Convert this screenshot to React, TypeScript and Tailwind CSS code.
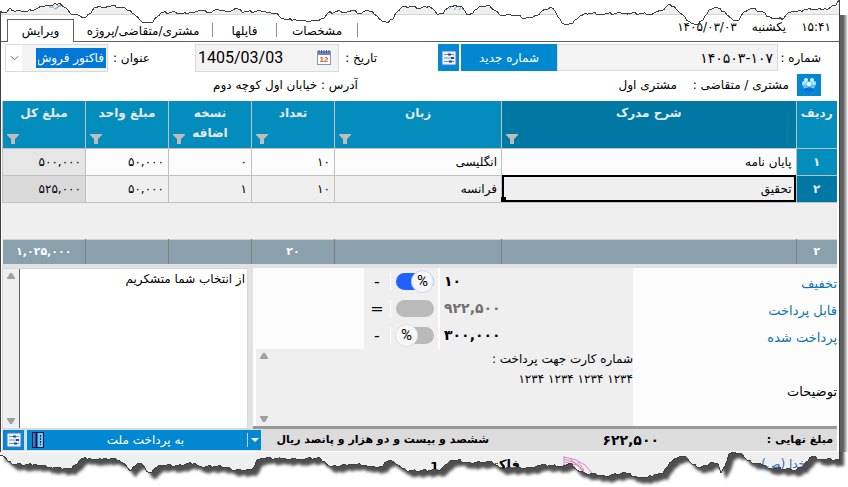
type Point = [number, number];

const TOP_EDGE: Point[] = [
  [0, 11], [7, 12], [10, 8], [14, 11], [28, 11], [36, 9], [42, 7], [47, 5], [53, 5], [60, 3], [66, 8], [70, 13],
  [80, 16], [86, 17], [91, 13], [95, 7], [99, 6], [104, 8], [111, 6], [125, 8], [130, 10], [134, 14], [140, 20],
  [145, 22], [153, 22], [157, 17], [161, 13], [175, 12], [183, 14], [192, 12], [203, 11], [210, 12], [217, 9],
  [225, 11], [231, 11], [238, 9], [244, 12], [261, 11], [268, 13], [276, 13], [280, 17], [288, 20], [295, 19],
  [303, 21], [317, 21], [324, 18], [328, 13], [340, 11], [347, 12], [353, 10], [360, 13], [367, 10], [372, 11],
  [377, 16], [383, 22], [388, 23], [393, 19], [397, 12], [401, 8], [405, 6], [421, 8], [429, 6], [433, 9],
  [438, 15], [443, 14], [448, 8], [455, 5], [461, 6], [467, 15], [473, 13], [480, 6], [490, 6], [496, 11],
  [500, 15], [516, 15], [524, 18], [531, 18], [537, 16], [541, 12], [551, 7], [555, 11], [558, 17], [562, 23],
  [568, 25], [573, 23], [580, 16], [585, 13], [602, 14], [625, 13], [650, 14], [656, 12], [662, 11], [668, 5],
  [674, 6], [679, 12], [685, 17], [690, 22], [698, 25], [703, 20], [709, 10], [718, 8], [725, 12], [731, 18],
  [734, 21], [739, 20], [744, 12], [753, 9], [761, 11], [770, 17], [778, 19], [784, 18], [789, 12], [796, 12],
  [804, 10], [814, 9], [823, 10], [831, 7], [836, 5], [839, 0],
];

const BOTTOM_EDGE: Point[] = [
  [0, 455], [3, 456], [8, 461], [12, 464], [28, 465], [35, 464], [50, 467], [71, 469], [75, 465], [81, 459],
  [90, 458], [98, 460], [105, 458], [119, 460], [127, 467], [131, 471], [136, 465], [141, 463], [145, 468],
  [150, 473], [154, 469], [160, 465], [178, 466], [186, 464], [195, 463], [202, 467], [218, 466], [226, 467],
  [232, 470], [250, 470], [254, 467], [257, 460], [264, 458], [283, 459], [300, 459], [320, 458], [325, 462],
  [331, 467], [352, 464], [365, 465], [375, 467], [383, 466], [388, 461], [391, 460], [396, 464], [403, 469],
  [409, 471], [440, 470], [445, 465], [452, 460], [458, 460], [468, 463], [480, 462], [492, 462], [500, 468],
  [532, 468], [541, 465], [560, 466], [572, 464], [577, 470], [585, 473], [605, 476], [626, 473], [635, 476],
  [646, 478], [654, 475], [663, 474], [668, 466], [675, 458], [681, 456], [687, 458], [693, 465], [701, 467],
  [708, 466], [712, 462], [718, 464], [721, 473], [725, 466], [729, 454], [735, 452], [742, 454], [748, 461],
  [763, 465], [770, 468], [786, 469], [796, 470], [803, 467], [808, 461], [813, 456], [820, 459], [839, 460],
];

// breaks every segment into short steps with a small repeatable wobble
const roughen = (points: Point[]) => {
  const out: string[] = [];
  points.forEach(([x, y], i) => {
    out.push(`${x},${y}`);
    const next = points[i + 1];
    if (!next) return;
    const steps = Math.floor((next[0] - x) / 2);
    for (let s = 1; s < steps; s++) {
      const px = x + s * 2;
      const py = y + ((next[1] - y) * s) / steps;
      out.push(`${px},${(py + ((px * 37) % 5) / 2 - 1).toFixed(1)}`);
    }
  });
  return out.join(" L");
};

const TOP_PATH = roughen(TOP_EDGE);
const BOTTOM_PATH = roughen(BOTTOM_EDGE);

const TABS = ["مشخصات", "فایلها", "مشتری/متقاضی/پروژه", "ویرایش"];

const COLUMNS = [
  { title: "ردیف", filter: false },
  { title: "شرح مدرک", filter: true },
  { title: "زبان", filter: true },
  { title: "تعداد", filter: true },
  { title: "نسخه\nاضافه", filter: true },
  { title: "مبلغ واحد", filter: true },
  { title: "مبلغ کل", filter: true },
];

const ROWS = [
  ["۱", "پایان نامه", "انگلیسی", "۱۰", "۰", "۵۰,۰۰۰", "۵۰۰,۰۰۰"],
  ["۲", "تحقیق", "فرانسه", "۱۰", "۱", "۵۰,۰۰۰", "۵۲۵,۰۰۰"],
];

const TOTALS = ["۲", "", "", "۲۰", "", "", "۱,۰۲۵,۰۰۰"];

const SettingsIcon = () => (
  <svg viewBox="0 0 16 16" className="h-4 w-4 shrink-0">
    <rect x="1" y="1" width="14" height="14" fill="#eef4fd" stroke="#3d7de0" />
    <path d="M3 4.5h10M3 8h10M3 11.5h10" stroke="#7c8db0" />
    <path d="M7 3.500h3v2H7zM10 7h3v2h-3zM8 10.500h3v2H8z" fill="#1747b8" />
  </svg>
);

const PeopleIcon = () => (
  <svg viewBox="0 0 16 16" className="h-4 w-4">
    <path d="M1 8q0-4 3-4t4 3q1-3 4-3t3 4l-2 3H3z" fill="#5cc8f7" />
    <path d="M3 13q0-4 5-4t5 4q-2 2-5 2t-5-2z" fill="#1667e8" />
    <circle cx="5" cy="3" r="2" fill="#d6f4ff" />
    <circle cx="11" cy="3" r="2" fill="#d6f4ff" />
    <circle cx="3" cy="6" r="2" fill="#a9e6ff" />
    <circle cx="13" cy="6" r="2" fill="#a9e6ff" />
    <circle cx="8" cy="7" r="2.400" fill="#e8faff" />
    <path d="M3 11q5-3 10 0" fill="none" stroke="#8fe0ff" />
  </svg>
);

const FunnelIcon = () => (
  <svg viewBox="0 0 12 10" className="absolute bottom-1 left-1 h-[10px] w-3">
    <path d="M0 0h12v1L8 5v5H4V5L0 1z" fill="#bdbdbd" />
  </svg>
);

const CalendarIcon = () => (
  <svg viewBox="0 0 14 15" className="h-[15px] w-[14px] shrink-0">
    <rect x="0.5" y="1.5" width="13" height="13" fill="#fff" stroke="#8795bd" />
    <path d="M1 2h12v3H1z" fill="#6f84bd" />
    <path d="M2 0v3M4.500 0v3M7 0v3M9.500 0v3M12 0v3" stroke="#46557f" />
    <text x="7" y="12" fontSize="8" fontWeight="700" textAnchor="middle" fill="#e4571b" fontFamily="Liberation Sans">
      12
    </text>
  </svg>
);

const CardIcon = () => (
  <svg viewBox="0 0 12 16" className="h-4 w-3 shrink-0">
    <rect x="0.5" y="0.5" width="11" height="15" fill="#5ccbf5" stroke="#2b1240" />
    <path d="M1 1h3v14H1z" fill="#1586c9" />
    <path d="M4.500 1v14" stroke="#2b1240" strokeWidth="2" />
    <path d="M8.500 3v10" stroke="#2b1240" strokeDasharray="2 1" />
  </svg>
);

const Arrow = ({ down = false }: { down?: boolean }) => (
  <svg viewBox="0 0 8 6" className="h-[6px] w-2">
    <path d={down ? "M0 0h8v1L5 6H3L0 1z" : "M0 6h8V5L5 0H3L0 5z"} fill="#a0a0a0" />
  </svg>
);

const ScrollBar = () => (
  <div className="flex w-4 shrink-0 flex-col items-center justify-between bg-[#efefef] py-1">
    <Arrow />
    <Arrow down />
  </div>
);

const Row = ({ label, id, value, sign, muted, toggle }: {
  label: string;
  id: string;
  value: string;
  sign: string;
  muted?: boolean;
  toggle: "on" | "off" | "none";
}) => (
  <div className="flex h-[27px] items-stretch">
    <label htmlFor={id} className="flex w-[204px] items-center bg-[#fcfcfc] pt-1 text-[13px] text-[#0b74ae]">
      {label}
    </label>
    <div className="flex min-w-0 flex-1 border-l-2 border-white">
      <input
        id={id}
        dir="ltr"
        defaultValue={value}
        className={`w-full bg-transparent px-1 text-left text-[14px] font-bold outline-none ${muted ? "text-[#707070]" : "text-black"}`}
      />
    </div>
    <label className="relative my-auto flex w-12 justify-center border-l border-white">
      <input
        type="checkbox"
        aria-label={`${label} %`}
        defaultChecked={toggle === "on"}
        className="h-[17px] w-[38px] appearance-none rounded-full bg-[#bababa] checked:bg-[#2260ff]"
      />
      {toggle !== "none" && (
        <span
          className={`absolute -top-[3px] flex h-[23px] w-[23px] items-center justify-center rounded-full border bg-[#f7f7f7] font-[Roboto] text-[15px] text-black ${toggle === "on" ? "right-1 border-[#c5d8ff]" : "left-1 border-[#e0e0e0]"}`}
        >
          %
        </span>
      )}
    </label>
    <span className="flex w-[26px] items-center justify-center text-[16px]">{sign}</span>
    <div className="w-[111px] bg-[#fcfcfc]" />
  </div>
);

const Header = () => (
  <header className="border-b border-[#606060]">
    <div className="h-[15px] border-b border-[#d4d4d4] bg-[#efefef]" />
    <div className="flex items-end justify-between pl-[6px]">
      <div className="flex h-[26px] gap-[15px] pr-2 pt-[3px]">
        <span>۱۵:۴۱</span>
        <span>یکشنبه</span>
        <span>۱۴۰۵/۰۳/۰۳</span>
      </div>
      <nav className="flex h-[22px]">
        {TABS.map((tab) => (
          <button
            key={tab}
            className={
              tab === "ویرایش"
                ? "-mb-px w-[67px] border border-b-0 border-[#606060] bg-white"
                : "my-1 border-r border-[#909090] leading-4 first:w-[81px] nth-2:w-16 nth-3:w-[139px]"
            }
          >
            {tab}
          </button>
        ))}
      </nav>
    </div>
  </header>
);

const Details = () => (
  <section className="px-1 pb-1">
    <div className="flex h-[31px] items-center pr-[14px]">
      <label htmlFor="number" className="w-[43px]">شماره :</label>
      <input
        id="number"
        dir="ltr"
        defaultValue="۱۴۰۵۰۳-۱۰۷"
        className="h-[27px] min-w-0 flex-1 border border-[#dadada] bg-[#f3f3f3] px-1 text-right text-[14px]"
      />
      <button className="h-[27px] w-24 bg-[#0288d1] text-white">شماره جدید</button>
      <button aria-label="تنظیمات شماره" className="mr-[2px] flex h-[27px] w-[21px] items-center justify-center bg-[#0288d1]">
        <SettingsIcon />
      </button>
      <label htmlFor="date" className="mr-[61px] w-[38px]">تاریخ :</label>
      <div className="flex h-[28px] w-[144px] items-center border border-[#dadada] bg-[#f3f3f3] pr-[7px]">
        <CalendarIcon />
        <input
          id="date"
          dir="ltr"
          defaultValue="1405/03/03"
          className="w-full min-w-0 bg-transparent pl-[2px] text-left font-[Roboto] text-[16px]"
        />
      </div>
      <label htmlFor="title" className="mr-[45px] w-[42px]">عنوان :</label>
      <div className="flex h-[28px] w-[103px] items-center justify-between border border-[#dadada] bg-[#f3f3f3] pr-px">
        <select id="title" className="h-5 w-[70px] appearance-none bg-[#0078d7] px-[2px] leading-5 text-white">
          <option>فاکتور فروش</option>
        </select>
        <span className="flex h-full w-4 items-center justify-center bg-white">
          <svg viewBox="0 0 10 6" className="h-[6px] w-[9px]">
            <path d="M1 1l4 4 4-4" fill="none" stroke="#606060" />
          </svg>
        </span>
      </div>
    </div>
    <div className="flex h-6 items-center pr-[14px]">
      <button aria-label="مشتریان" className="flex h-[22px] w-6 items-center justify-center bg-[#0288d1]">
        <PeopleIcon />
      </button>
      <span className="mr-2 w-[112px]">مشتری / متقاضی :</span>
      <span>مشتری اول</span>
      <span className="mr-auto pl-[208px]">آدرس : خیابان اول کوچه دوم</span>
    </div>
  </section>
);

const ItemsTable = () => (
  <table className="w-full table-fixed border-collapse bg-[#efefef]">
    <colgroup>
      <col className="w-[41px]" />
      <col />
      <col className="w-[167px]" />
      <col className="w-[83px]" />
      <col className="w-[83px]" />
      <col className="w-[83px]" />
      <col className="w-[83px]" />
    </colgroup>
    <thead>
      <tr className="h-[47px]">
        {COLUMNS.map(({ title, filter }, i) => (
          <th
            key={title}
            className={`relative whitespace-pre border-b border-l border-[#c0c0c0] pt-[2px] align-top leading-5 text-[#e8e8e8] ${i === 1 ? "bg-[#0078a4]" : "bg-[#038dbc]"}`}
          >
            {title}
            {filter && <FunnelIcon />}
          </th>
        ))}
      </tr>
    </thead>
    <tbody>
      {ROWS.map((row, r) => (
        <tr key={row[0]} className={r === 0 ? "h-[27px] bg-[#fcfcfc]" : "h-[27px] bg-[#efefef]"}>
          {row.map((cell, c) => {
            if (c === 0) {
              return (
                <th key={c} className={`border-b border-l border-[#c0c0c0] text-[#e8e8e8] ${r === 1 ? "bg-[#0078a4]" : "bg-[#038dbc]"}`}>
                  {cell}
                </th>
              );
            }
            if (r === 1 && c === 1) {
              return (
                <td key={c} className="relative border-b border-l border-[#c0c0c0] px-1 outline-2 -outline-offset-2 outline-black">
                  {cell}
                  <span className="absolute -left-px bottom-0 h-[5px] w-[5px] bg-black" />
                </td>
              );
            }
            return (
              <td
                key={c}
                className={`border-b border-l border-[#c0c0c0] px-1 ${c === 6 ? (r === 0 ? "bg-[#e6e6e6]" : "bg-[#dadada]") : ""}`}
              >
                {cell}
              </td>
            );
          })}
        </tr>
      ))}
      <tr className="h-[37px]">
        <td colSpan={7} />
      </tr>
    </tbody>
    <tfoot>
      <tr className="h-[25px] bg-[#8aa1ad] text-[11px] text-white">
        {TOTALS.map((total, i) => (
          <td key={i} className="border-l border-t border-[#808080] border-t-[#d0d0d0] text-center font-bold last:border-l-0">
            {total}
          </td>
        ))}
      </tr>
    </tfoot>
  </table>
);

const Summary = () => (
  <section className="flex gap-[5px] bg-[#e2e2e2] pt-1">
    <div className="min-w-0 flex-1 border-b-[3px] border-[#999] bg-[#efefef]">
      <Row label="تخفیف" id="discount" value="۱۰" sign="-" toggle="on" />
      <Row label="قابل پرداخت" id="payable" value="۹۲۲,۵۰۰" sign="=" toggle="none" muted />
      <Row label="پرداخت شده" id="paid" value="۳۰۰,۰۰۰" sign="-" toggle="off" />
      <div className="flex h-[77px]">
        <label htmlFor="notes" className="flex w-[204px] items-center bg-[#fcfcfc] pt-2 text-[13px]">توضیحات</label>
        <textarea
          id="notes"
          defaultValue={"شماره کارت جهت پرداخت :\n۱۲۳۴ ۱۲۳۴ ۱۲۳۴ ۱۲۳۴"}
          className="min-w-0 flex-1 resize-none overflow-hidden bg-transparent leading-5 outline-none"
        />
        <div className="flex border-l-[3px] border-white">
          <ScrollBar />
        </div>
      </div>
    </div>
    <div className="flex w-[246px] border border-[#d8d8d8] bg-white">
      <textarea
        aria-label="پیام"
        defaultValue="از انتخاب شما متشکریم"
        className="min-w-0 flex-1 resize-none overflow-hidden border-l border-[#606060] px-[2px] leading-5 outline-none"
      />
      <ScrollBar />
    </div>
  </section>
);

const PayBar = () => (
  <section className="flex h-[23px] items-center border-b border-white bg-[#dcdcdc] pl-px text-[11px] font-bold">
    <span className="w-[178px] pr-1">مبلغ نهایی :</span>
    <span className="w-[170px] text-[14px]">۶۲۲,۵۰۰</span>
    <span className="whitespace-nowrap">ششصد و بیست و دو هزار و پانصد ریال</span>
    <div className="mr-auto flex h-5 w-[234px] bg-[#0288d1] text-white">
      <button aria-label="انتخاب درگاه" className="my-[3px] flex w-[14px] items-center justify-center border-l border-[#d0d0d0]">
        <svg viewBox="0 0 8 4" className="h-1 w-2">
          <path d="M0 0h8L4 4z" fill="#fff" />
        </svg>
      </button>
      <button className="flex flex-1 items-center pl-[5px] text-[12px] font-normal">
        <span className="flex-1">به پرداخت ملت</span>
        <CardIcon />
      </button>
    </div>
    <button aria-label="تنظیمات پرداخت" className="mr-[3px] flex h-5 w-[21px] items-center justify-center bg-[#0288d1]">
      <SettingsIcon />
    </button>
  </section>
);

const TornTop = () => (
  <svg viewBox="0 0 848 28" preserveAspectRatio="none" className="absolute left-0 top-0 h-7 w-full">
    <path d="M49 7h5M54 9q5-1 6-4M57 6h4M449 9l3-3M454 10l4-5M459 10l2-3" fill="none" stroke="#8a9db4" />
    <path d={`M0,0 L${TOP_PATH} L848,0 Z`} fill="#fff" />
    <path d={`M${TOP_PATH}`} fill="none" stroke="#404040" shapeRendering="crispEdges" />
  </svg>
);

const TornBottom = () => (
  <svg viewBox="0 452 848 35" preserveAspectRatio="none" className="block h-[35px] w-full">
    <defs>
      <clipPath id="paper">
        <path d={`M0,440 L${BOTTOM_PATH} L839,440 Z`} />
      </clipPath>
      <filter id="soft" x="-5%" y="-30%" width="110%" height="160%">
        <feGaussianBlur stdDeviation="1.5" />
      </filter>
    </defs>
    <path d={`M0,440 L${BOTTOM_PATH} L839,440 Z`} fill="#505050" filter="url(#soft)" transform="translate(5 6)" />
    <path d={`M0,440 L${BOTTOM_PATH} L839,440 Z`} fill="#efefef" />
    <g clipPath="url(#paper)" fontFamily="DejaVu Sans" fontWeight="700">
      <text x="520" y="469" fontSize="13" direction="rtl">فاکتور</text>
      <text x="439" y="471" fontSize="13">1</text>
      <text x="806" y="468" fontSize="12" direction="rtl" fontWeight="400" fill="#2f6fb5">خدا (ص)</text>
      <path
        d="M564 457l12 3 9 5 8 9M564 459l11 4 9 8M565 462l12 3 8 8M564 456v9l11 2M570 459l9 7 4 6M578 462l6 8"
        fill="none"
        stroke="#d884bc"
      />
    </g>
    <path d={`M${BOTTOM_PATH} L839,452`} fill="none" stroke="#404040" shapeRendering="crispEdges" />
  </svg>
);

export default function App() {
  return (
    <main dir="rtl" className="relative overflow-hidden bg-white font-['DejaVu_Sans',sans-serif] text-[12px] text-black">
      <div className="flex">
        <div className="mt-[15px] w-2 shrink-0 bg-linear-to-r from-[#606060] from-40% to-white" />
        <div className="min-w-0 flex-1 border-x border-[#404040] bg-white">
          <Header />
          <Details />
          <div className="pl-px pr-[2px]">
            <ItemsTable />
            <Summary />
            <PayBar />
          </div>
        </div>
      </div>
      <TornBottom />
      <TornTop />
    </main>
  );
}
